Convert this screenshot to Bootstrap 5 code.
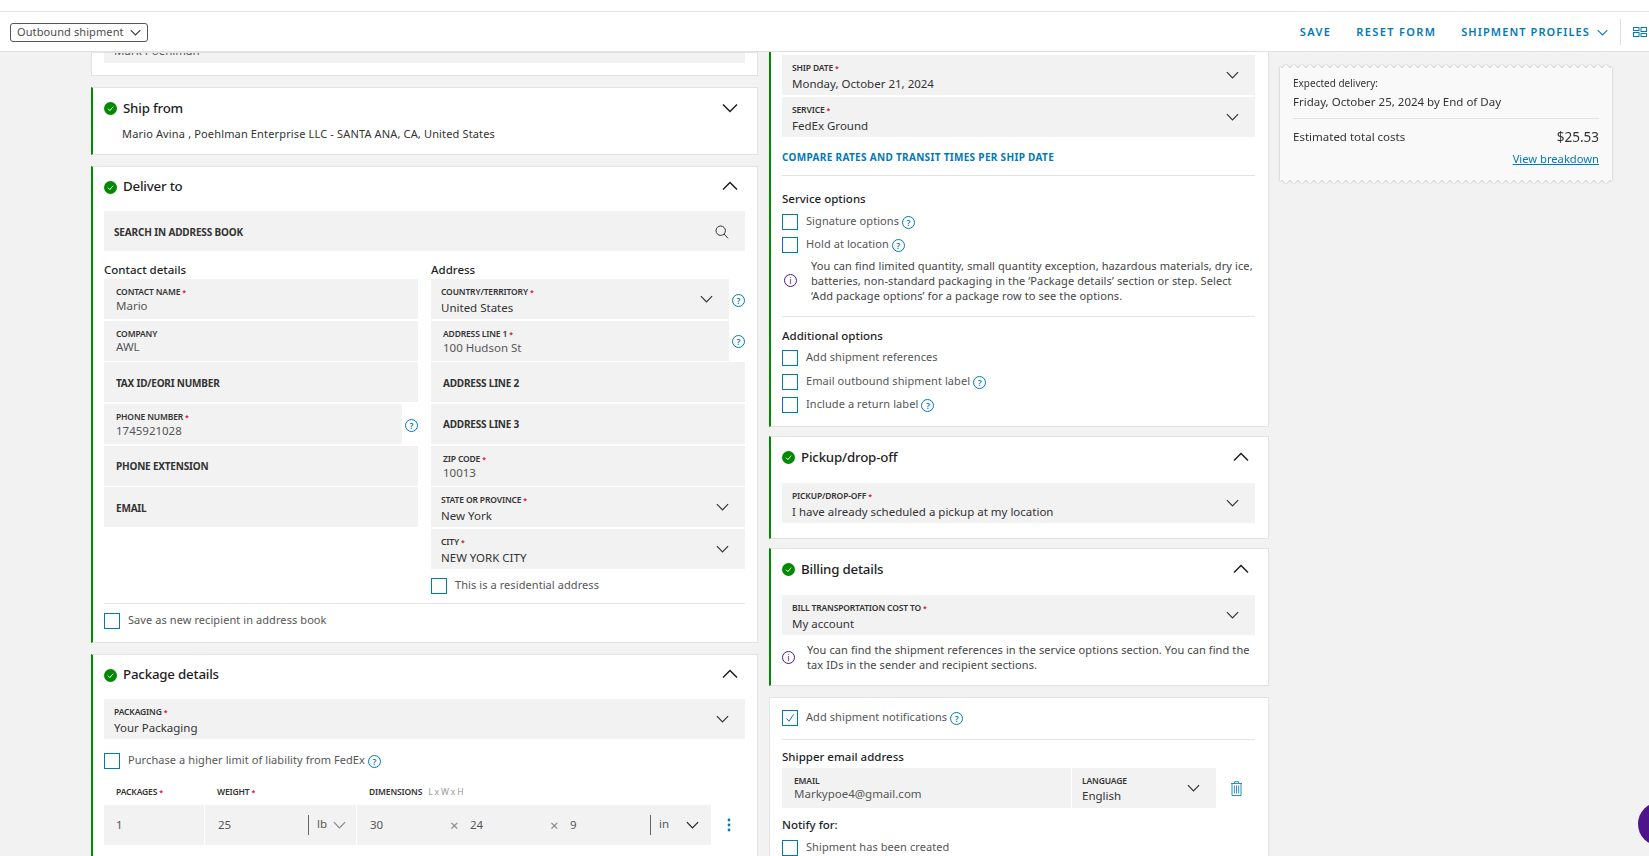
<!DOCTYPE html>
<html lang="en">
<head>
<meta charset="UTF-8">
<title>Create shipment</title>
<link rel="stylesheet" href="https://cdn.jsdelivr.net/npm/bootstrap@5.3.0/dist/css/bootstrap.min.css">
<style>
body { background:#f2f2f2; color:#333; font-family:"Noto Sans",sans-serif; font-size:11px; overflow:hidden; height:856px; }
.topstrip { height:12px; background:#fff; border-bottom:1px solid #e3e3e3; }
.hdr { height:40px; background:#fff; border-bottom:1px solid #e0e0e0; padding:1px 2px 0 10px; }
.ship-type { width:138px; height:19px; border:1px solid #555; border-radius:3px; padding:0 6px; font-size:11px; color:#4d4d4d; letter-spacing:.1px; }
.ship-type .chev { width:11px; height:7px; }
.hdr-link { color:#007ab7; font-size:11px; font-weight:600; letter-spacing:1.1px; text-decoration:none; }
.hdr-link.wide { letter-spacing:1.35px; }
.hdr-sep { width:1px; height:26px; background:#e0e0e0; }
.main { height:804px; overflow:hidden; }
.col-left { width:667px; margin-left:91px; }
.col-mid { width:500px; margin-left:11px; }
.col-side { width:332px; margin-left:11px; padding-top:12px; }
.sect { background:#fff; border:1px solid #e3e3e3; border-left:2px solid #008a00; border-radius:0; margin-bottom:11px; }
.col-left .sect { padding:0 12px 0 11px; }
.col-mid .sect { padding:0 13px 0 11px; }
.sect.plain { border-left:1px solid #e3e3e3; }
.col-left .sect.plain { padding-left:12px; }
.col-mid .sect.plain { padding-left:12px; }
.sect-head { height:41px; margin-bottom:5px; }
.sect-title { font-size:13.3px; font-weight:500; color:#1f1f1f; margin-left:6px; letter-spacing:-.2px; }
.tick { width:13px; height:13px; flex:none; }
.chev-lg { width:16px; height:10px; margin:0 6px 2px 0; flex:none; }
.col-left .chev-lg { margin-right:7px; }
.chev { width:13px; height:8px; flex:none; }
.fld { background:#f2f2f2; height:40px; padding:8px 10px 0 12px; margin-bottom:1.67px; position:relative; line-height:1; }
.fld.pick { padding-left:10px; padding-right:16px; }
.fld.flat { padding-top:1px; display:flex; align-items:center; font-size:10px; font-weight:700; letter-spacing:-.2px; }
.fld-lab { display:block; font-size:8.5px; line-height:10px; font-weight:600; color:#333; letter-spacing:-.15px; }
.req { color:#de002e; font-size:7px; margin-left:2px; }
.fld-val { display:block; font-size:11.5px; line-height:14px; margin-top:1px; color:#565656; }
.pick .fld-val { margin-top:3px; color:#333; }
.pick .chev { position:absolute; right:16px; top:16px; }
.two-up { gap:13px; }
.two-up > div { width:314px; }
.sub-head { font-size:11.5px; line-height:16px; font-weight:500; color:#1f1f1f; }
.with-help .fld { flex:1; }
.help-slot { width:16px; flex:none; text-align:right; margin-bottom:1.67px; }
.help { display:inline-block; width:13px; height:13px; border:1px solid #007ab7; border-radius:50%; color:#007ab7; font-size:8.5px; line-height:11px; text-align:center; font-weight:600; vertical-align:-1px; margin-left:3px; letter-spacing:0; }
.help-slot .help { margin-left:0; }
.info { display:inline-block; width:13px; height:13px; border:1px solid #4d148c; border-radius:50%; color:#4d148c; font-size:9px; line-height:11px; text-align:center; flex:none; }
.cbx { width:16px; height:16px; border:1.5px solid #007ab7; flex:none; display:flex; align-items:center; justify-content:center; }
.cbx-row { gap:8px; color:#565656; font-size:11px; line-height:14px; letter-spacing:.08px; }
.rule { height:1px; background:#e3e3e3; }
.note { font-size:11px; line-height:15px; color:#444; letter-spacing:.1px; }
.blue-link { color:#007ab7; font-size:10px; font-weight:700; line-height:14px; text-decoration:none; letter-spacing:.32px; }
.pkg-head { font-size:8.5px; line-height:12px; font-weight:600; letter-spacing:-.15px; margin-bottom:6px; }
.pkg-row { gap:1px; height:40px; }
.pkg-cell { background:#f2f2f2; height:40px; color:#565656; font-size:11.5px; }
.unit { border-left:1px solid #666; height:20px; padding-left:8px; line-height:18px; }
.times { color:#888; font-size:15px; }
.kebab { color:#007ab7; }
.ticket-wrap { filter:drop-shadow(0 0 1px rgba(0,0,0,.25)); }
.ticket { height:120px; background:#f9f9f9; padding:11px 13px 0 13px;
  -webkit-mask:conic-gradient(from 135deg at top,#0000,#000 1deg 89deg,#0000 90deg) top/8px 51% repeat-x,conic-gradient(from -45deg at bottom,#0000,#000 1deg 89deg,#0000 90deg) bottom/8px 51% repeat-x;
  mask:conic-gradient(from 135deg at top,#0000,#000 1deg 89deg,#0000 90deg) top/8px 51% repeat-x,conic-gradient(from -45deg at bottom,#0000,#000 1deg 89deg,#0000 90deg) bottom/8px 51% repeat-x; }
.chat-blob { position:fixed; left:1638px; top:802px; width:44px; height:44px; border-radius:50%; background:#4d148c; }
</style>
</head>
<body>
<svg width="0" height="0" class="position-absolute">
  <symbol id="tick" viewBox="0 0 13 13"><circle cx="6.5" cy="6.5" r="6.5" fill="#008a00"/><path d="M4 6.7 5.9 8.6 9.2 4.6" fill="none" stroke="#fff" stroke-width="1"/></symbol>
  <symbol id="down" viewBox="0 0 16 10"><path d="M1 1.5 8 8.5 15 1.5" fill="none" stroke="currentColor" stroke-width="1.5"/></symbol>
  <symbol id="up" viewBox="0 0 16 10"><path d="M1 8.5 8 1.5 15 8.5" fill="none" stroke="currentColor" stroke-width="1.5"/></symbol>
</svg>

<div class="topstrip"></div>
<header class="hdr d-flex align-items-center justify-content-between">
  <div class="ship-type d-flex align-items-center justify-content-between">Outbound shipment <svg class="chev" style="color:#333"><use href="#down"/></svg></div>
  <div class="d-flex align-items-center">
    <a class="hdr-link wide" href="#">SAVE</a>
    <a class="hdr-link wide" style="margin-left:25px" href="#">RESET FORM</a>
    <a class="hdr-link" style="margin-left:25px" href="#">SHIPMENT PROFILES</a>
    <svg class="chev" style="color:#007ab7;width:11px;height:7px;margin-left:7px"><use href="#down"/></svg>
    <div class="hdr-sep" style="margin:0 12px 0 12px"></div>
    <svg width="14" height="10" viewBox="0 0 14 10" fill="none" stroke="#007ab7"><rect x=".5" y=".5" width="5.5" height="3"/><rect x=".5" y="5.5" width="5.5" height="4"/><rect x="8" y=".5" width="5.5" height="4"/><rect x="8" y="6.5" width="5.5" height="3"/></svg>
  </div>
</header>

<div class="main d-flex align-items-start">
  <div class="col-left">
    <div class="card sect plain" style="height:24px">
      <div class="fld d-flex align-items-end overflow-hidden" style="height:10px;padding:0 12px 5px 10px;margin:0"><span class="fld-val" style="margin:0">Mark Poehlman</span></div>
    </div>

    <div class="card sect">
      <div class="sect-head d-flex align-items-center" style="margin-bottom:-1px">
        <svg class="tick"><use href="#tick"/></svg><span class="sect-title">Ship from</span>
        <svg class="chev-lg ms-auto" style="color:#1f1f1f"><use href="#down"/></svg>
      </div>
      <div style="padding:0 0 14px 18px;line-height:12px;color:#333;letter-spacing:.15px">Mario Avina , Poehlman Enterprise LLC - SANTA ANA, CA, United States</div>
    </div>

    <div class="card sect" style="margin-bottom:11px">
      <div class="sect-head d-flex align-items-center" style="height:40px;margin-bottom:4px">
        <svg class="tick"><use href="#tick"/></svg><span class="sect-title">Deliver to</span>
        <svg class="chev-lg ms-auto" style="color:#1f1f1f"><use href="#up"/></svg>
      </div>
      <div class="fld flat justify-content-between" style="padding-left:10px;margin:0;letter-spacing:-.15px">SEARCH IN ADDRESS BOOK
        <svg width="14" height="14" viewBox="0 0 14 14" fill="none" stroke="#333" style="margin-right:6px"><circle cx="5.7" cy="5.7" r="4.7"/><path d="M9 9 13 13.3"/></svg>
      </div>
      <div class="d-flex two-up" style="margin-top:11px">
        <div>
          <div class="sub-head" style="margin-bottom:1px">Contact details</div>
          <div class="fld"><span class="fld-lab">CONTACT NAME<span class="req">*</span></span><span class="fld-val">Mario</span></div>
          <div class="fld"><span class="fld-lab">COMPANY</span><span class="fld-val">AWL</span></div>
          <div class="fld flat">TAX ID/EORI NUMBER</div>
          <div class="d-flex align-items-center with-help">
            <div class="fld"><span class="fld-lab">PHONE NUMBER<span class="req">*</span></span><span class="fld-val">1745921028</span></div>
            <div class="help-slot"><span class="help">?</span></div>
          </div>
          <div class="fld flat">PHONE EXTENSION</div>
          <div class="fld flat">EMAIL</div>
        </div>
        <div>
          <div class="sub-head" style="margin-bottom:1px">Address</div>
          <div class="d-flex align-items-center with-help">
            <div class="fld pick"><span class="fld-lab">COUNTRY/TERRITORY<span class="req">*</span></span><span class="fld-val">United States</span><svg class="chev"><use href="#down"/></svg></div>
            <div class="help-slot"><span class="help">?</span></div>
          </div>
          <div class="d-flex align-items-center with-help">
            <div class="fld"><span class="fld-lab">ADDRESS LINE 1<span class="req">*</span></span><span class="fld-val">100 Hudson St</span></div>
            <div class="help-slot"><span class="help">?</span></div>
          </div>
          <div class="fld flat">ADDRESS LINE 2</div>
          <div class="fld flat">ADDRESS LINE 3</div>
          <div class="fld"><span class="fld-lab">ZIP CODE<span class="req">*</span></span><span class="fld-val">10013</span></div>
          <div class="fld pick"><span class="fld-lab">STATE OR PROVINCE<span class="req">*</span></span><span class="fld-val">New York</span><svg class="chev"><use href="#down"/></svg></div>
          <div class="fld pick"><span class="fld-lab">CITY<span class="req">*</span></span><span class="fld-val">NEW YORK CITY</span><svg class="chev"><use href="#down"/></svg></div>
          <div class="d-flex cbx-row" style="margin-top:9px"><span class="cbx"></span>This is a residential address</div>
        </div>
      </div>
      <div class="rule" style="margin-top:9px"></div>
      <div class="d-flex cbx-row" style="margin:9px 0 13px"><span class="cbx"></span>Save as new recipient in address book</div>
    </div>

    <div class="card sect" style="height:220px">
      <div class="sect-head d-flex align-items-center" style="margin-bottom:3px">
        <svg class="tick"><use href="#tick"/></svg><span class="sect-title">Package details</span>
        <svg class="chev-lg ms-auto" style="color:#1f1f1f"><use href="#up"/></svg>
      </div>
      <div class="fld pick" style="margin:0"><span class="fld-lab">PACKAGING<span class="req">*</span></span><span class="fld-val">Your Packaging</span><svg class="chev"><use href="#down"/></svg></div>
      <div class="d-flex cbx-row" style="margin-top:14px"><span class="cbx"></span><span>Purchase a higher limit of liability from FedEx<span class="help">?</span></span></div>
      <div class="d-flex pkg-head" style="margin-top:17px">
        <div style="width:101px;padding-left:12px">PACKAGES<span class="req">*</span></div>
        <div style="width:152px;padding-left:12px">WEIGHT<span class="req">*</span></div>
        <div style="padding-left:12px">DIMENSIONS <span class="ms-1 fw-normal" style="color:#999">L x W x H</span></div>
      </div>
      <div class="d-flex align-items-center pkg-row">
        <div class="pkg-cell d-flex align-items-center" style="width:100px;padding-left:12px">1</div>
        <div class="pkg-cell d-flex align-items-center" style="width:151px;padding-left:13px">
          <span style="width:90px">25</span><span class="unit">lb</span><svg class="chev" style="margin-left:6px;color:#888"><use href="#down"/></svg>
        </div>
        <div class="pkg-cell d-flex align-items-center" style="width:354px;padding-left:13px">
          <span style="width:80px">30</span><span class="times" style="width:20px">×</span>
          <span style="width:80px">24</span><span class="times" style="width:20px">×</span>
          <span style="width:80px">9</span><span class="unit" style="width:36px">in</span><svg class="chev" style="color:#222"><use href="#down"/></svg>
        </div>
        <svg width="4" height="14" viewBox="0 0 4 14" style="margin-left:15px" class="kebab" fill="currentColor"><circle cx="2" cy="2" r="1.4"/><circle cx="2" cy="7" r="1.4"/><circle cx="2" cy="12" r="1.4"/></svg>
      </div>
    </div>
  </div>

  <div class="col-mid">
    <div class="card sect" style="border-top:0;padding-top:3px;padding-bottom:13px;margin-bottom:9px">
      <div class="fld pick" style="margin-bottom:2px"><span class="fld-lab">SHIP DATE<span class="req">*</span></span><span class="fld-val">Monday, October 21, 2024</span><svg class="chev"><use href="#down"/></svg></div>
      <div class="fld pick" style="margin:0"><span class="fld-lab">SERVICE<span class="req">*</span></span><span class="fld-val">FedEx Ground</span><svg class="chev"><use href="#down"/></svg></div>
      <a class="blue-link d-block" style="margin-top:13px" href="#">COMPARE RATES AND TRANSIT TIMES PER SHIP DATE</a>
      <div class="rule" style="margin-top:11px"></div>
      <div class="sub-head" style="margin-top:15px">Service options</div>
      <div class="d-flex cbx-row" style="margin-top:7px"><span class="cbx"></span><span>Signature options<span class="help">?</span></span></div>
      <div class="d-flex cbx-row" style="margin-top:7px"><span class="cbx"></span><span>Hold at location<span class="help">?</span></span></div>
      <div class="d-flex align-items-center note" style="margin-top:5px"><span class="info" style="margin-left:2px">i</span><span style="margin-left:14px">You can find limited quantity, small quantity exception, hazardous materials, dry ice, batteries, non-standard packaging in the ‘Package details’ section or step. Select ‘Add package options’ for a package row to see the options.</span></div>
      <div class="rule" style="margin-top:13px"></div>
      <div class="sub-head" style="margin-top:11px">Additional options</div>
      <div class="d-flex cbx-row" style="margin-top:6px"><span class="cbx"></span>Add shipment references</div>
      <div class="d-flex cbx-row" style="margin-top:8px"><span class="cbx"></span><span>Email outbound shipment label<span class="help">?</span></span></div>
      <div class="d-flex cbx-row" style="margin-top:7px"><span class="cbx"></span><span>Include a return label<span class="help">?</span></span></div>
    </div>

    <div class="card sect" style="padding-bottom:15px;margin-bottom:9px">
      <div class="sect-head d-flex align-items-center">
        <svg class="tick"><use href="#tick"/></svg><span class="sect-title">Pickup/drop-off</span>
        <svg class="chev-lg ms-auto" style="color:#1f1f1f"><use href="#up"/></svg>
      </div>
      <div class="fld pick" style="margin:0"><span class="fld-lab">PICKUP/DROP-OFF<span class="req">*</span></span><span class="fld-val">I have already scheduled a pickup at my location</span><svg class="chev"><use href="#down"/></svg></div>
    </div>

    <div class="card sect" style="padding-bottom:13px">
      <div class="sect-head d-flex align-items-center">
        <svg class="tick"><use href="#tick"/></svg><span class="sect-title">Billing details</span>
        <svg class="chev-lg ms-auto" style="color:#1f1f1f"><use href="#up"/></svg>
      </div>
      <div class="fld pick" style="margin:0"><span class="fld-lab">BILL TRANSPORTATION COST TO<span class="req">*</span></span><span class="fld-val">My account</span><svg class="chev"><use href="#down"/></svg></div>
      <div class="d-flex align-items-center note" style="margin-top:7px"><span class="info">i</span><span style="margin-left:12px">You can find the shipment references in the service options section. You can find the tax IDs in the sender and recipient sections.</span></div>
    </div>

    <div class="card sect plain" style="height:170px;padding-top:12px">
      <div class="d-flex cbx-row"><span class="cbx"><svg width="10" height="10" viewBox="0 0 10 10" fill="none" stroke="#007ab7"><path d="M1.5 5.5 4 8.2 8.5 1.5"/></svg></span><span>Add shipment notifications<span class="help">?</span></span></div>
      <div class="rule" style="margin-top:13px"></div>
      <div class="sub-head" style="margin-top:9px;margin-bottom:3px">Shipper email address</div>
      <div class="d-flex align-items-center">
        <div class="fld mb-0" style="width:289px;padding-left:12px"><span class="fld-lab">EMAIL</span><span class="fld-val">Markypoe4@gmail.com</span></div>
        <div class="fld pick mb-0" style="width:144px;margin-left:1px"><span class="fld-lab">LANGUAGE</span><span class="fld-val">English</span><svg class="chev"><use href="#down"/></svg></div>
        <svg width="13" height="15" viewBox="0 0 13 15" fill="none" stroke="#2a8fc7" style="margin-left:14px"><path d="M1 2.5H12M4.5 2.5V.7H8.5V2.5M2 2.5V14.5H11V2.5M4.3 4.5V12.5M6.5 4.5V12.5M8.7 4.5V12.5"/></svg>
      </div>
      <div class="sub-head" style="margin-top:9px">Notify for:</div>
      <div class="d-flex cbx-row" style="margin-top:7px"><span class="cbx"></span>Shipment has been created</div>
    </div>
  </div>

  <div class="col-side">
    <div class="ticket-wrap">
      <div class="ticket">
        <div style="font-size:10px;line-height:12px;margin-top:2px">Expected delivery:</div>
        <div style="font-size:11.5px;line-height:14px;margin-top:6px;color:#333">Friday, October 25, 2024 by End of Day</div>
        <div class="rule" style="margin-top:9px"></div>
        <div class="d-flex justify-content-between align-items-center" style="margin-top:10px;line-height:16px">
          <span style="font-size:11.5px">Estimated total costs</span><span style="font-size:13.5px">$25.53</span>
        </div>
        <div class="text-end" style="margin-top:7px;line-height:14px"><a href="#" style="color:#007ab7;font-size:11.2px">View breakdown</a></div>
      </div>
    </div>
  </div>
</div>
<div class="chat-blob"></div>
</body>
</html>
